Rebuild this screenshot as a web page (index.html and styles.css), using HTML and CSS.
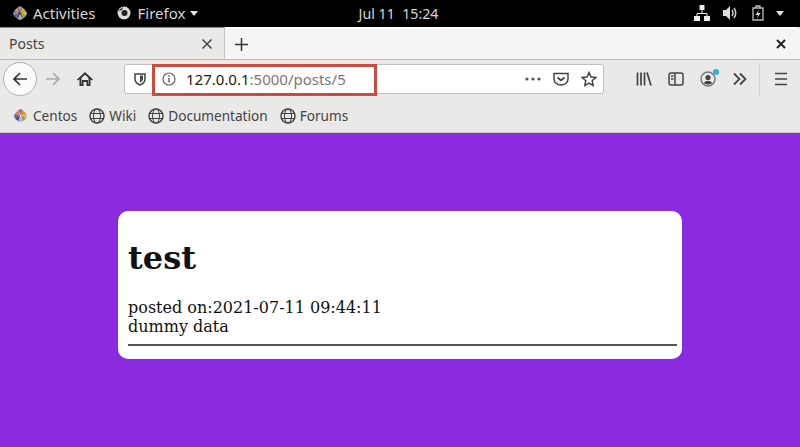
FILE: index.html
```html
<!DOCTYPE html>
<html lang="en">
<head>
<meta charset="utf-8">
<title>Posts</title>
<link rel="stylesheet" href="styles.css">
</head>
<body>
<header class="topbar">
  <div class="top-left">
    <svg class="ic16" viewBox="0 0 16 16"><path fill="#a77fb5" d="M8 1l2.500 1.500L8 7.500 5.500 2.500z"/><path fill="#d8a94a" d="M10.500 2.500L14 6 8.500 8 8 7.500z"/><path fill="#c9c06a" d="M14 6l1 2.500-1 2.500-5.500-3z"/><path fill="#8fae4c" d="M14 11l-3.500 3-2-6z"/><path fill="#b9a9c8" d="M10.500 14L8 15l-2.500-1L8 8.500z"/><path fill="#6a62a8" d="M5.500 14L2 11l5.500-3z"/><path fill="#8d7fb8" d="M2 11L1 8.500 2 6l5.500 2z"/><path fill="#c2a36a" d="M2 6l3.500-3.500L7.500 8z"/></svg>
    <span class="top-item">Activities</span>
    <svg class="ic16 ff" viewBox="0 0 16 16"><circle cx="8" cy="8" r="6.500" fill="#ddd"/><circle cx="8.500" cy="8" r="3" fill="#222"/><path fill="#222" d="M2 6l5-4-1 3z"/></svg>
    <span class="top-item">Firefox</span>
    <span class="caret"></span>
  </div>
  <div class="top-clock">Jul 11&nbsp; 15:24</div>
  <div class="top-right">
    <svg class="ic16" viewBox="0 0 16 16"><path fill="#eee" d="M5.500 0h5v5h-5zM0 11h6v5H0zM10 11h6v5h-6z"/><path stroke="#eee" fill="none" d="M8 5v3M3 11V8.500h10V11"/></svg>
    <svg class="ic16" viewBox="0 0 16 16"><path fill="#ddd" d="M1 5h3l4-4v14l-4-4H1z"/><path fill="none" stroke="#ccc" stroke-width="1.500" d="M10 5q2 3 0 6M12 3q3.500 5 0 10"/></svg>
    <svg class="ic16" viewBox="0 0 16 16"><path fill="none" stroke="#bbb" stroke-width="1.300" d="M3 3h10v12H3zM6 3V1h4v2"/><path fill="#ddd" d="M9 5L5.500 10H8l-1 3.500L10.500 8H8z"/></svg>
    <span class="caret"></span>
  </div>
</header>

<div class="browser">
  <div class="tabstrip">
    <div class="tab">
      <span class="tab-title">Posts</span>
      <svg class="ic12" viewBox="0 0 12 12"><path stroke="#444" stroke-width="1.500" d="M1.500 1.500l9 9M10.500 1.500l-9 9"/></svg>
    </div>
    <svg class="newtab" viewBox="0 0 16 16"><path stroke="#333" stroke-width="1.600" d="M8 1v14M1 8h14"/></svg>
    <svg class="winclose" viewBox="0 0 10 10"><path stroke="#222" stroke-width="2" d="M1 1l8 8M9 1l-8 8"/></svg>
  </div>

  <div class="navbar">
    <div class="backbtn">
      <svg class="ic16" viewBox="0 0 16 16"><path fill="none" stroke="#333" stroke-width="1.700" d="M15 8H2M8 2L2 8l6 6"/></svg>
    </div>
    <svg class="ic16 fwd" viewBox="0 0 16 16"><path fill="none" stroke="#a9a9a9" stroke-width="1.700" d="M1 8h13M8 2l6 6-6 6"/></svg>
    <svg class="ic16 home" viewBox="0 0 16 16"><path fill="#333" d="M8 1L0 8.500l1 1L2.500 8.200V15H6.500v-4h3v4h4V8.200L15 9.500l1-1zM4.500 7L8 3.700 11.500 7v6h-.5V9H5v4h-.5z"/></svg>
    <div class="urlbar">
      <svg class="ic14 shield" viewBox="0 0 14 14"><path fill="none" stroke="#444" stroke-width="1.500" d="M2 2h10v5q0 4-5 6-5-2-5-6z"/><path fill="#444" d="M7 3.500h3v3.500q0 2-3 3.500z"/></svg>
      <svg class="ic14 info" viewBox="0 0 14 14"><circle cx="7" cy="7" r="6" fill="none" stroke="#666" stroke-width="1.200"/><path stroke="#666" stroke-width="1.500" d="M7 6v4.500M7 3.200v1.500"/></svg>
      <span class="url"><span class="host">127.0.0.1</span>:5000/posts/5</span>
      <span class="url-spacer"></span>
      <svg class="dots" viewBox="0 0 16 4"><circle cx="2" cy="2" r="1.600"/><circle cx="8" cy="2" r="1.600"/><circle cx="14" cy="2" r="1.600"/></svg>
      <svg class="ic16 pocket" viewBox="0 0 16 16"><path fill="none" stroke="#444" stroke-width="1.500" d="M1 2.500h14V8a7 6 0 0 1-14 0z"/><path fill="none" stroke="#444" stroke-width="1.700" d="M4.500 6.500L8 9.500l3.500-3"/></svg>
      <svg class="ic16 star" viewBox="0 0 16 16"><path fill="none" stroke="#444" stroke-width="1.500" d="M8 1.500l2 4.500 4.800.5-3.600 3.200 1 4.800L8 12.100l-4.200 2.400 1-4.800L1.200 6.500 6 6z"/></svg>
      <div class="url-mark"></div>
    </div>
    <div class="tools">
      <svg class="ic16" viewBox="0 0 16 16"><path fill="none" stroke="#444" stroke-width="1.700" d="M1.500 1.500v13M5 1.500v13M8.500 1.500v13M11 1.500l4 13"/></svg>
      <svg class="ic16" viewBox="0 0 16 16"><rect x="1" y="2" width="14" height="12" rx="2" fill="none" stroke="#444" stroke-width="1.500"/><path stroke="#444" stroke-width="1.500" d="M7 2v12M3 5h2.500M3 8h2.500"/></svg>
      <div class="account">
        <svg class="ic16" viewBox="0 0 16 16"><circle cx="8" cy="8" r="7" fill="none" stroke="#777" stroke-width="1.400"/><circle cx="8" cy="6.500" r="2.600" fill="#444"/><path fill="#444" d="M3.500 12q4.500-4.500 9 0-4.500 3-9 0z"/></svg>
        <span class="badge"></span>
      </div>
      <svg class="ic16" viewBox="0 0 16 16"><path fill="none" stroke="#444" stroke-width="1.800" d="M2 2.500L7.500 8 2 13.500M8 2.500L13.500 8 8 13.500"/></svg>
    </div>
    <div class="divider"></div>
    <svg class="ic16 menu" viewBox="0 0 16 16"><path stroke="#444" stroke-width="1.700" d="M2 2.500h12M2 8h12M2 13.500h12"/></svg>
  </div>

  <div class="bookmarks">
    <span class="bm">
      <svg class="logo" viewBox="0 0 16 16"><path fill="#a05fb0" d="M8 1l2.500 1.500L8 7.500 5.500 2.500z"/><path fill="#e0902a" d="M10.500 2.500L14 6 8.500 8 8 7.500z"/><path fill="#d8b84a" d="M14 6l1 2.500-1 2.500-5.500-3z"/><path fill="#7ea83c" d="M14 11l-3.500 3-2-6z"/><path fill="#c9a9d0" d="M10.500 14L8 15l-2.500-1L8 8.500z"/><path fill="#3f3f94" d="M5.500 14L2 11l5.500-3z"/><path fill="#6f5fb0" d="M2 11L1 8.500 2 6l5.500 2z"/><path fill="#c88a4a" d="M2 6l3.500-3.500L7.500 8z"/></svg>Centos</span>
    <span class="bm globe-bm"><svg class="ic16" viewBox="0 0 16 16"><circle cx="8" cy="8" r="7" fill="none" stroke="#444" stroke-width="1.500"/><ellipse cx="8" cy="8" rx="3.500" ry="7" fill="none" stroke="#444"/><path stroke="#444" d="M1 5.500h14M1 10.500h14"/></svg>Wiki</span>
    <span class="bm globe-bm"><svg class="ic16" viewBox="0 0 16 16"><circle cx="8" cy="8" r="7" fill="none" stroke="#444" stroke-width="1.500"/><ellipse cx="8" cy="8" rx="3.500" ry="7" fill="none" stroke="#444"/><path stroke="#444" d="M1 5.500h14M1 10.500h14"/></svg>Documentation</span>
    <span class="bm globe-bm"><svg class="ic16" viewBox="0 0 16 16"><circle cx="8" cy="8" r="7" fill="none" stroke="#444" stroke-width="1.500"/><ellipse cx="8" cy="8" rx="3.500" ry="7" fill="none" stroke="#444"/><path stroke="#444" d="M1 5.500h14M1 10.500h14"/></svg>Forums</span>
  </div>
</div>

<main class="page">
  <article class="card">
    <h1 class="post-title">test</h1>
    <p class="post-line">posted on:2021-07-11 09:44:11</p>
    <p class="post-line">dummy data</p>
    <hr class="rule">
  </article>
</main>
</body>
</html>
```

FILE: styles.css
```css
* { box-sizing: border-box; }
html, body { margin: 0; height: 100%; }
body {
  width: 800px;
  height: 447px;
  overflow: hidden;
  display: flex;
  flex-direction: column;
  font-family: "Noto Sans", "Open Sans", sans-serif;
  background: #8a2be2;
}
svg { display: block; flex: none; }
.ic16 { width: 16px; height: 16px; }
.ic14 { width: 14px; height: 14px; }
.ic12 { width: 12px; height: 12px; }
.logo { width: 15px; height: 15px; }

.topbar {
  height: 27px;
  background: #000;
  color: #d6d6d6;
  display: grid;
  grid-template-columns: 1fr auto 1fr;
  align-items: center;
  font-size: 15px;
  padding: 0 16px 1px 12px;
}
.top-left { display: flex; align-items: center; }
.top-item { margin-left: 5px; }
.ff { margin-left: 20px; }
.ff + .top-item { margin-left: 6px; }
.top-clock { margin-left: 1px; font-size: 14.200px; }
.top-right { display: flex; align-items: center; justify-content: flex-end; gap: 12px; }
.caret {
  width: 0; height: 0;
  margin-left: 5px;
  border-left: 4.500px solid transparent;
  border-right: 4.500px solid transparent;
  border-top: 5px solid #e4e4e4;
}
.top-right .caret { margin-left: -2px; }

.browser { background: #e9e9e7; border-bottom: 1px solid #c9c9c9; height: 106px; display: flex; flex-direction: column; color: #333; }
.tabstrip {
  height: 33px;
  display: flex;
  align-items: center;
  background: #f5f5f5;
  border-top: 2px solid #fff;
  border-bottom: 1px solid #b8b8b8;
  border-radius: 6px 6px 0 0;
}
.tab {
  width: 225px;
  height: 32px;
  margin-top: -2px;
  align-self: flex-start;
  padding: 0 11px 0 9px;
  display: flex;
  align-items: center;
  justify-content: space-between;
  background: #e9e9e7;
  border-top: 1px solid #5a9bd0;
  border-right: 1px solid #c4c4c4;
  font-size: 14px;
  color: #444;
}
.newtab { width: 15px; height: 15px; margin-left: 9px; }
.winclose { width: 10px; height: 10px; margin-left: auto; margin-right: 14px; }

.navbar { height: 37px; display: flex; align-items: center; padding: 0 0 0 3px; }
.backbtn {
  width: 34px; height: 34px;
  border-radius: 50%;
  background: #fbfbfb;
  border: 1px solid #b4b4b4;
  display: flex; align-items: center; justify-content: center;
}
.fwd { margin-left: 8px; }
.home { margin-left: 16px; }
.urlbar {
  position: relative;
  width: 480px;
  height: 30px;
  margin-left: 31px;
  background: #fff;
  border: 1px solid #c0c0c0;
  border-radius: 3px;
  display: flex;
  align-items: center;
}
.shield { margin-left: 8px; }
.info { margin-left: 15px; }
.url { margin-left: 10px; padding-top: 1px; font-size: 15px; color: #777; white-space: nowrap; }
.host { color: #222; }
.url-spacer { flex: 1; }
.dots { width: 16px; height: 4px; fill: #555; margin-right: 12px; }
.pocket { margin-right: 12px; }
.star { margin-right: 6px; }
.url-mark {
  position: absolute;
  left: 27px; top: -1px;
  width: 225px; height: 32px;
  border: 3px solid #d0493f;
}
.tools { display: flex; align-items: center; gap: 16px; margin-left: 32px; }
.account { position: relative; }
.badge {
  position: absolute; top: -2px; right: -3px;
  width: 6px; height: 6px; border-radius: 50%;
  background: #2bb0e8;
}
.divider { width: 1px; height: 32px; background: #cfcfcf; margin-left: 11px; }
.menu { margin-left: 13px; }

.bookmarks { height: 35px; display: flex; align-items: center; padding: 2px 0 0 13px; gap: 12px; font-size: 13.600px; color: #444; }
.bm { display: flex; align-items: center; gap: 5px; }
.globe-bm { gap: 4px; }

.page { flex: 1; display: flex; justify-content: center; align-items: flex-start; padding-top: 78px; }
.card {
  width: 564px;
  height: 148px;
  background: #fff;
  border-radius: 10px;
  padding: 10px 5px 0 10px;
  color: #111;
  font-family: "DejaVu Serif", serif;
}
.post-title { margin: 19px 0 21px; font-size: 32px; line-height: 37px; font-weight: 700; }
.post-line { margin: 0; font-size: 16px; line-height: 19px; }
.rule { margin: 8px 0 0; border: 0; border-top: 2px solid #555; }
```
